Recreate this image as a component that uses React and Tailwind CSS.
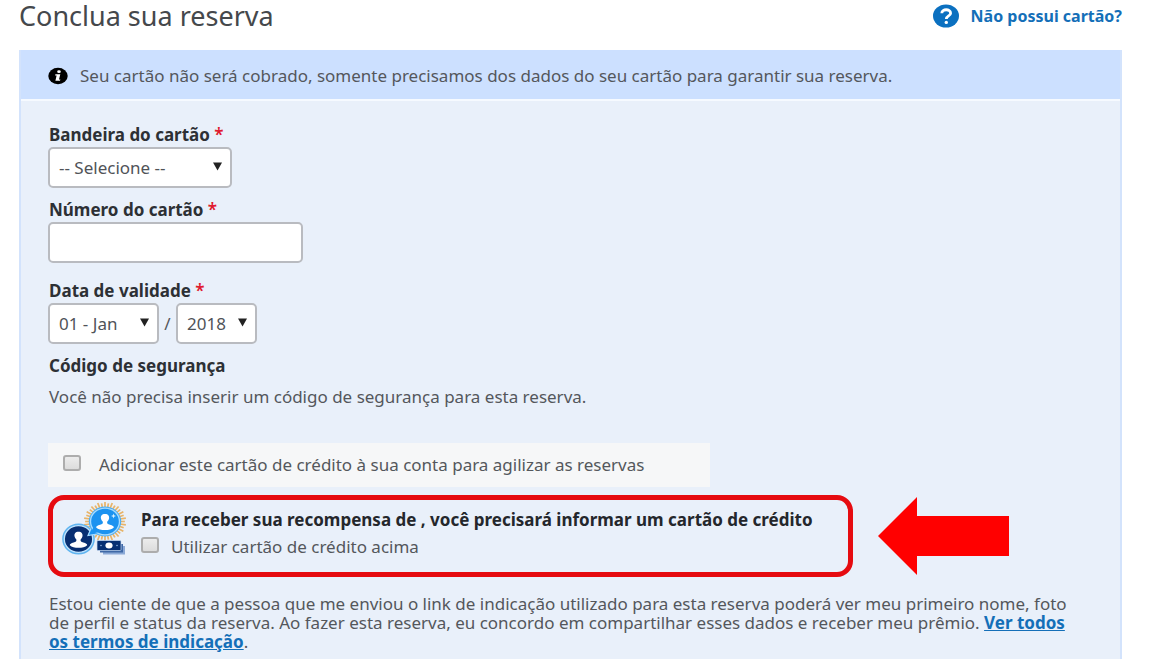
import React from "react";

function Required() {
  return <span className="font-semibold text-[#e01a2f]"> *</span>;
}

function Arrow({ className }) {
  return (
    <svg viewBox="0 0 9 9" className={`pointer-events-none absolute h-[9px] w-[9px] ${className}`} aria-hidden="true">
      <path d="M0 0.5H9L4.5 8.5Z" fill="#222" />
    </svg>
  );
}

const control =
  "h-[41px] appearance-none rounded-[5px] border-2 border-[#b9bbc0] bg-white text-[17px] text-[#505358]";

const fieldLabel = "pl-px font-bold text-[#2d3035]";

const checkbox =
  "mt-[2px] h-4 w-[18px] shrink-0 self-start appearance-none rounded-[3px] border-2 border-[#adadad] bg-linear-to-b from-[#ececec] to-[#dcdcdc] checked:bg-[#0a6ebd]";

const person =
  "M0 -8C-3 -8 -4 -6 -3.8 -3.8C-3.6 -2.2 -2.8 -1.2 -2 -0.4C-1.8 1.4 -2.4 2 -4.6 2.6C-7 3.3 -8.2 4 -8.2 5.4C-6.4 7.2 -3.4 8 0 8C3.4 8 6.4 7.2 8.2 5.4C8.2 4 7 3.3 4.6 2.6C2.4 2 1.8 1.4 2 -0.4C2.8 -1.2 3.6 -2.2 3.8 -3.8C4 -6 3 -8 0 -8Z";

function ReferralIcon() {
  const rays = Array.from({ length: 36 }, (_, i) => i * 10);
  return (
    <svg viewBox="0 0 66 56" className="h-14 w-[66px] shrink-0" aria-hidden="true">
      <g transform="translate(43 19.5) scale(1.08 1)" stroke="#e8b469" strokeWidth="1.6">
        {rays.map((a) => (
          <line key={a} x1="0" y1="-14" x2="0" y2={a % 20 ? -18.4 : -19.6} transform={`rotate(${a})`} />
        ))}
      </g>
      <path d="M41 44H63V52.5H41Z" fill="#8ba9d6" />
      <path d="M38 42H61V50.5H38Z" fill="#3f68a6" />
      <rect x="35" y="38.5" width="24" height="10" rx="1" fill="#062f73" stroke="#c7dcf5" strokeWidth="0.7" />
      <ellipse cx="47" cy="43.5" rx="3.6" ry="3" fill="#fff" />
      <circle cx="39" cy="43.5" r="0.8" fill="#8fb0dc" />
      <circle cx="55" cy="43.5" r="0.8" fill="#8fb0dc" />
      <g transform="translate(16.5 37) scale(1.06 1)">
        <circle r="15.4" fill="#5fb4f0" />
        <circle r="13.4" fill="#082f72" stroke="#bfe4ff" strokeWidth="1.2" />
        <path d={person} fill="#fff" transform="translate(0 0.8)" />
      </g>
      <path d="M30 24L26 33.5L38 31.5Z" fill="#1c93f0" stroke="#a9dcff" strokeWidth="1.2" />
      <g transform="translate(43 19.5) scale(1.08 1)">
        <circle r="15" fill="#4aaef5" />
        <circle r="13.4" fill="#1c93f0" stroke="#a9dcff" strokeWidth="1.2" />
        <path d={person} fill="#fff" transform="translate(0 0.6)" />
      </g>
      <path d="M31.5 25L28.5 32L37 30Z" fill="#1c93f0" />
      <path d="M51.5 11.5L52.1 13.3L54 14L52.1 14.7L51.5 16.5L50.9 14.7L49 14L50.9 13.3Z" fill="#d9f0ff" />
    </svg>
  );
}

export default function App() {
  return (
    <main className="bg-white pr-12 pl-[19px] font-['Noto_Sans',sans-serif] text-[17px] leading-6 text-[#54575c]">
      <header className="flex h-[50px] items-start justify-between">
        <h1 className="text-[27px] leading-8 text-[#45484c]">Conclua sua reserva</h1>
        <a href="#sem-cartao" className="flex h-8 items-center gap-3 text-[16px] font-bold text-[#146fb8]">
          <svg viewBox="0 0 26 24" className="h-6 w-[26px]" aria-hidden="true">
            <ellipse cx="13" cy="12" rx="13" ry="11.5" fill="#0b70c0" />
            <path d="M8.8 9.2C8.8 4.6 17.6 4.6 17.6 9.2C17.6 12 13.3 11.8 13.3 15" fill="none" stroke="#fff" strokeWidth="2.8" />
            <circle cx="13.3" cy="18.4" r="1.7" fill="#fff" />
          </svg>
          Não possui cartão?
        </a>
      </header>

      <section className="border-x-2 border-[#d3e3fc] bg-[#e9f0fa]">
        <div className="flex items-center gap-3 border-b-2 border-[#f6faff] bg-[#cce0ff] pt-[14px] pb-[11px] pl-[27px]">
          <svg viewBox="0 0 20 18" className="h-[18px] w-5 shrink-0" aria-hidden="true">
            <ellipse cx="10" cy="9" rx="9.7" ry="8.3" fill="#000" />
            <ellipse cx="11" cy="4.7" rx="1.8" ry="1.4" fill="#fff" />
            <path d="M7.4 7.2H12.3L11 12.4H12.4L12 13.8H7.4L8.6 8.6H7.1Z" fill="#fff" />
          </svg>
          <p>Seu cartão não será cobrado, somente precisamos dos dados do seu cartão para garantir sua reserva.</p>
        </div>

        <form className="flex flex-col items-start pt-[22px] pr-10 pl-[27px]" onSubmit={(e) => e.preventDefault()}>
          <div className="flex flex-col items-start">
            <label htmlFor="brand" className={fieldLabel}>
              Bandeira do cartão
              <Required />
            </label>
            <div className="relative">
              <select id="brand" className={`${control} w-[184px] pl-[9px]`}>
                <option>-- Selecione --</option>
              </select>
              <Arrow className="top-[15px] right-[10px]" />
            </div>
          </div>

          <div className="mt-[10px] flex flex-col items-start">
            <label htmlFor="number" className={fieldLabel}>
              Número do cartão
              <Required />
            </label>
            <input id="number" type="text" className={`${control} w-[255px] px-[9px]`} />
          </div>

          <fieldset className="mt-4">
            <legend className={fieldLabel}>
              Data de validade
              <Required />
            </legend>
            <div className="flex items-center">
              <div className="relative">
                <select aria-label="Mês" className={`${control} w-[111px] pl-[9px]`}>
                  <option>01 - Jan</option>
                </select>
                <Arrow className="top-[15px] right-[10px]" />
              </div>
              <span className="w-[17px] text-center">/</span>
              <div className="relative">
                <select aria-label="Ano" className={`${control} w-[81px] pl-[9px]`}>
                  <option>2018</option>
                </select>
                <Arrow className="top-[15px] right-[10px]" />
              </div>
            </div>
          </fieldset>

          <h2 className={`mt-[10px] ${fieldLabel}`}>Código de segurança</h2>
          <p className="mt-[7px] pl-px">Você não precisa inserir um código de segurança para esta reserva.</p>

          <label className="mt-[34px] flex w-[662px] items-center gap-[18px] bg-[#f6f7f8] py-[10px] pl-[15px]">
            <input type="checkbox" className={checkbox} />
            Adicionar este cartão de crédito à sua conta para agilizar as reservas
          </label>

          <div className="mt-2 flex items-center gap-[25px]">
            <div className="flex h-[82px] w-[805px] gap-[13px] rounded-[16px] border-5 border-[#e60b10] pt-[2px] pl-[9px]">
              <ReferralIcon />
              <div className="pt-[6px]">
                <p className="font-bold text-[#24272c]">
                  Para receber sua recompensa de , você precisará informar um cartão de crédito
                </p>
                <label className="mt-[3px] flex items-center gap-3">
                  <input type="checkbox" className={checkbox} />
                  Utilizar cartão de crédito acima
                </label>
              </div>
            </div>
            <svg viewBox="0 0 131 78" className="h-[78px] w-[131px] shrink-0" aria-hidden="true">
              <path d="M0 39L39 0V19H131V59H39V78Z" fill="#f00" />
            </svg>
          </div>

          <p className="mt-[17px] pb-2 pl-px leading-[19px]">
            Estou ciente de que a pessoa que me enviou o link de indicação utilizado para esta reserva poderá ver meu
            primeiro nome, foto de perfil e status da reserva. Ao fazer esta reserva, eu concordo em compartilhar esses
            dados e receber meu prêmio.{" "}
            <a href="#termos" className="font-bold text-[#146fb8] underline">
              Ver todos os termos de indicação
            </a>
            .
          </p>
        </form>
      </section>
    </main>
  );
}
